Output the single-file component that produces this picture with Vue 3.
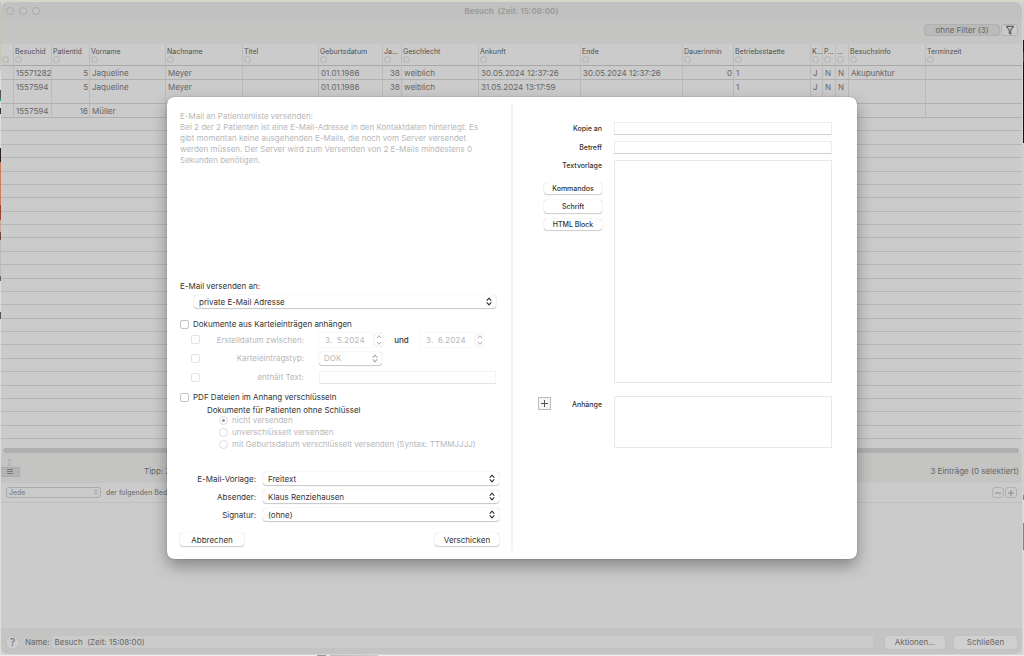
<script setup>
const columns = [
  { label: '', w: 12 },
  { label: 'Besuchid', w: 38 },
  { label: 'Patientid', w: 38 },
  { label: 'Vorname', w: 76 },
  { label: 'Nachname', w: 77 },
  { label: 'Titel', w: 76 },
  { label: 'Geburtsdatum', w: 64 },
  { label: 'Ja…', w: 19 },
  { label: 'Geschlecht', w: 77 },
  { label: 'Ankunft', w: 102 },
  { label: 'Ende', w: 102 },
  { label: 'Dauerinmin', w: 51 },
  { label: 'Betriebsstaette', w: 77 },
  { label: 'K…', w: 12 },
  { label: 'P…', w: 13 },
  { label: '…', w: 13 },
  { label: 'Besuchsinfo', w: 77 },
  { label: 'Terminzeit', w: 0 }
]
const right = new Set([2, 7, 11])
const rows = [
  ['', '15571282', '5', 'Jaqueline', 'Meyer', '', '01.01.1986', '38', 'weiblich', '30.05.2024 12:37:26', '30.05.2024 12:37:26', '0', '1', 'J', 'N', 'N', 'Akupunktur', ''],
  ['', '1557594', '5', 'Jaqueline', 'Meyer', '', '01.01.1986', '38', 'weiblich', '31.05.2024 13:17:59', '', '', '1', 'J', 'N', 'N', '', ''],
  ['', '1557594', '16', 'Müller', '', '', '', '', '', '', '', '', '', '', '', '', '', '']
]
const radios = ['nicht versenden', 'unverschlüsselt versenden', 'mit Geburtsdatum verschlüsselt versenden (Syntax: TTMMJJJJ)']
const choices = [
  { id: 'vorlage', label: 'E-Mail-Vorlage:', value: 'Freitext' },
  { id: 'absender', label: 'Absender:', value: 'Klaus Renziehausen' },
  { id: 'signatur', label: 'Signatur:', value: '(ohne)' }
]
</script>

<template>
  <div class="desktop">
    <main class="window">
      <header class="titlebar">
        <span class="lights"><i></i><i></i><i></i></span>
        <h1>Besuch&nbsp; (Zeit: 15:08:00)</h1>
      </header>
      <div class="toolbar">
        <button class="filter">ohne Filter (3)</button>
        <button class="funnel" aria-label="Filter">
          <svg viewBox="0 0 10 10" width="10" height="10"><path d="M1.5 1.4h7L5.8 5v4L4.2 8V5z" fill="none" stroke="#5c5c5c" stroke-width="1.1" stroke-linejoin="round" /></svg>
        </button>
      </div>
      <table>
        <colgroup><col v-for="(c, i) in columns" :key="i" :style="c.w ? { width: c.w + 'px' } : {}" /></colgroup>
        <thead>
          <tr><th v-for="(c, i) in columns" :key="i"><span>{{ c.label }}</span><i></i></th></tr>
        </thead>
        <tbody>
          <tr v-for="(r, i) in rows" :key="i" :class="{ tall: i === 1 }">
            <td v-for="(v, j) in r" :key="j" :class="{ num: right.has(j) }">{{ v }}</td>
          </tr>
        </tbody>
      </table>
      <div class="blank"><div v-for="n in 24" :key="n"></div></div>
      <div class="scroll"><div class="thumb"></div></div>
      <div class="status">
        <div class="tools">
          <span class="sigma">∑</span>
          <button class="lines" aria-label="Liste">
            <svg viewBox="0 0 8 6" width="8" height="6"><path d="M1 .5h6M1 2.5h6M1 4.5h6" stroke="#777" stroke-width="1" /></svg>
          </button>
        </div>
        <span class="tip">Tipp: Zeilen mit Doppelklick öffnen</span>
        <span class="count">3 Einträge (0 selektiert)</span>
      </div>
      <div class="condition">
        <span class="pick jede">
          <select id="jede" aria-label="Verknüpfung"><option>Jede</option></select>
          <svg viewBox="0 0 6 9" width="4" height="6"><path d="M1 3.4 3 1.2l2 2.2M1 5.6l2 2.2 2-2.2" /></svg>
        </span>
        <label for="jede">der folgenden Bedingungen</label>
        <span class="pm">
          <button aria-label="Entfernen"><svg viewBox="0 0 8 8" width="8" height="8"><path d="M1 4h6" /></svg></button>
          <button aria-label="Hinzufügen"><svg viewBox="0 0 8 8" width="8" height="8"><path d="M1 4h6M4 1v6" /></svg></button>
        </span>
      </div>
      <div class="lower"></div>
      <footer>
        <button class="help">?</button>
        <label for="name">Name:</label>
        <input id="name" type="text" value="Besuch  (Zeit: 15:08:00)" />
        <button class="act">Aktionen...</button>
        <button class="act close">Schließen</button>
      </footer>
    </main>

    <section class="sheet" role="dialog" aria-label="E-Mail versenden">
      <div class="left">
        <p class="info">E-Mail an Patientenliste versenden:<br />Bei 2 der 2 Patienten ist eine E-Mail-Adresse in den Kontaktdaten hinterlegt. Es<br />gibt momentan keine ausgehenden E-Mails, die noch vom Server versendet<br />werden müssen. Der Server wird zum Versenden von 2 E-Mails mindestens 0<br />Sekunden benötigen.</p>
        <label for="an" class="line">E-Mail versenden an:</label>
        <span class="pick an">
          <select id="an"><option>private E-Mail Adresse</option></select>
          <svg viewBox="0 0 6 9" width="6" height="9"><path d="M1 3.4 3 1.2l2 2.2M1 5.6l2 2.2 2-2.2" /></svg>
        </span>
        <label class="check docs"><input type="checkbox" />Dokumente aus Karteieinträgen anhängen</label>
        <div class="opts">
          <input id="c1" type="checkbox" disabled /><label for="c1">Erstelldatum zwischen:</label>
          <div class="dates">
            <input type="text" value="3.  5.2024" aria-label="Datum von" disabled />
            <span class="stepper"><svg viewBox="0 0 8 14" width="8" height="14"><path d="M2 5l2-2.4L6 5M2 9l2 2.4L6 9" /></svg></span>
            <b>und</b>
            <input type="text" value="3.  6.2024" aria-label="Datum bis" disabled />
            <span class="stepper"><svg viewBox="0 0 8 14" width="8" height="14"><path d="M2 5l2-2.4L6 5M2 9l2 2.4L6 9" /></svg></span>
          </div>
          <input id="c2" type="checkbox" disabled /><label for="c2">Karteieintragstyp:</label>
          <span class="pick dok">
            <select aria-label="Karteieintragstyp" disabled><option>DOK</option></select>
            <svg viewBox="0 0 6 9" width="6" height="9"><path d="M1 3.4 3 1.2l2 2.2M1 5.6l2 2.2 2-2.2" /></svg>
          </span>
          <input id="c3" type="checkbox" disabled /><label for="c3">enthält Text:</label>
          <input class="contains" type="text" aria-label="enthält Text" disabled />
        </div>
        <label class="check"><input type="checkbox" />PDF Dateien im Anhang verschlüsseln</label>
        <div class="keys">
          <div class="keyhead">Dokumente für Patienten ohne Schlüssel</div>
          <label v-for="(r, i) in radios" :key="r"><input type="radio" name="key" :checked="i === 0" disabled />{{ r }}</label>
        </div>
        <div class="choices">
          <template v-for="c in choices" :key="c.id">
            <label :for="c.id">{{ c.label }}</label>
            <span class="pick">
              <select :id="c.id"><option>{{ c.value }}</option></select>
              <svg viewBox="0 0 6 9" width="6" height="9"><path d="M1 3.4 3 1.2l2 2.2M1 5.6l2 2.2 2-2.2" /></svg>
            </span>
          </template>
        </div>
        <div class="buttons"><button>Abbrechen</button><button>Verschicken</button></div>
      </div>
      <div class="rule"></div>
      <div class="right">
        <label for="kopie">Kopie an</label><input id="kopie" type="text" />
        <label for="betreff">Betreff</label><input id="betreff" type="text" />
        <div class="side">
          <label for="text">Textvorlage</label>
          <button>Kommandos</button>
          <button class="mid">Schrift</button>
          <button>HTML Block</button>
        </div>
        <textarea id="text" class="body"></textarea>
        <div class="attach">
          <button aria-label="Anhang hinzufügen"><svg viewBox="0 0 9 9" width="9" height="9"><path d="M1 4.5h7M4.5 1v7" stroke="#555" stroke-width="1" /></svg></button>
          <label for="files">Anhänge</label>
        </div>
        <textarea id="files" class="files"></textarea>
      </div>
    </section>
  </div>
</template>

<style>
html, body { margin: 0; }
</style>

<style scoped>
* { box-sizing: border-box; }
.desktop {
  position: relative;
  display: flex;
  flex-direction: column;
  min-height: 100vh;
  padding: 2px 2px 2px 1px;
  font: 8px/10px Inter, "Liberation Sans", sans-serif;
  color: #333;
  background:
    linear-gradient(#d9d6cb, #d9d6cb) 0 0 / 100% 2px no-repeat,
    linear-gradient(90deg, #eee 317px, #999 317px, #999 326px, #eee 326px, #eee 330px, #bbb 330px, #ccc 378px, #eee 378px) 0 100% / 100% 1px no-repeat,
    linear-gradient(#c9c4b8 0 70px, #ddd 70px 90px, #555 90px 98px, #2f9a60 98px 101px, #ddd 101px 108px, #333 108px 114px, #ddd 114px 148px, #2d2220 148px 162px, #cc8060 162px 205px, #9a4434 205px 220px, #c8a89c 220px 232px, #6c4c40 232px 240px, #bbb 240px 276px, #666 276px 281px, #ddd 281px 312px, #555 312px 319px, #ddd 319px) 0 0 / 1px 100% no-repeat,
    linear-gradient(#d0ccc0 0 40px, #1c1520 40px 52px, #4a2f58 52px 62px, #15131a 62px 143px, #ccc 143px 495px, #888 495px 500px, #ddd 500px 523px, #5c86c8 523px 550px, #ddd 550px) 100% 0 / 1px 100% no-repeat,
    #d4d4d4;
}
button, input, select, textarea { font: inherit; color: inherit; margin: 0; padding: 0; border: 0; background: none; outline: 0; }
textarea { resize: none; display: block; }
button { display: flex; align-items: center; justify-content: center; white-space: nowrap; }

.window {
  flex: 1;
  display: flex;
  flex-direction: column;
  overflow: hidden;
  border-radius: 7px;
  background: #cbcbcb;
  color: #666;
}
.titlebar { position: relative; height: 18px; background: #c1c1c1; display: flex; align-items: center; justify-content: center; }
.titlebar h1 { margin: 0; font-size: 8px; line-height: 10px; font-weight: 700; color: #9c9c9c; }
.lights { position: absolute; left: 5px; top: 5px; display: flex; gap: 5px; }
.lights i { width: 8px; height: 8px; border: 1px solid #aaa; border-radius: 50%; background: #c4c4c4; }
.toolbar { height: 24px; background: #c5c5c3; display: flex; align-items: flex-start; justify-content: flex-end; gap: 1px; padding: 4px 4px 0 0; }
.toolbar button { height: 12px; border-radius: 3px; border: 1px solid #b0b0b0; }
.filter { width: 76px; background: #bababa; }
.funnel { width: 17px; background: #cacaca; }

table { width: 100%; table-layout: fixed; border-collapse: separate; border-spacing: 0; }
th { height: 22px; padding: 0 0 0 1px; border-bottom: 1px solid #a8a8a8; border-left: 1px solid #bdbdbd; vertical-align: top; text-align: left; font-weight: 400; font-size: 7px; line-height: 9px; color: #505050; overflow: hidden; white-space: nowrap; }
th:first-child, td:first-child { border-left: 0; }
th span { display: block; height: 9px; margin-top: 3px; }
th i { display: block; width: 7px; height: 7px; border: 1px solid #b2b2b2; border-radius: 50%; }
td { height: 14px; padding: 1px 1px 0 2px; border-bottom: 1px solid #b0b0b0; border-left: 1px solid #bababa; vertical-align: top; line-height: 12px; overflow: hidden; white-space: nowrap; }
.tall td { height: 24px; }
.num { text-align: right; }
.blank { flex: 1; display: flex; flex-direction: column; }
.blank div { flex: 1; border-bottom: 1px solid #b5b5b5; }
.scroll { height: 14px; padding: 5px 3px 0 2px; display: flex; align-items: flex-end; }
.thumb { width: 100%; height: 5px; border-radius: 3px; background: #b0b0b0; }
.status { height: 30px; background: #c4c4c2; display: flex; align-items: center; padding-right: 3px; }
.tools { width: 143px; align-self: stretch; padding-top: 4px; }
.sigma { display: block; padding-left: 6px; height: 10px; color: #aaa; }
.lines { width: 19px; height: 10px; background: #b4b4b4; border: 1px solid #aaa; border-left: 0; }
.tip { padding-top: 5px; }
.count { margin-left: auto; padding-top: 5px; }
.condition { height: 20px; display: flex; align-items: center; gap: 5px; padding: 0 5px; border-bottom: 1px solid #bfbfbf; font-size: 7px; }
.condition .jede { width: 95px; height: 11px; border: 1px solid #aaa; box-shadow: none; background: none; }
.condition .jede select { padding-left: 2px; color: #777; }
.condition .jede svg { stroke: #888; right: 2px; top: 1px; }
.pm { display: flex; gap: 1px; margin-left: auto; }
.pm button { width: 12px; height: 11px; border: 1px solid #b0b0b0; border-radius: 3px; }
.pm svg { stroke: #888; stroke-width: 1; }
.lower { height: 125px; }
footer { height: 26px; background: #c4c4c2; display: flex; align-items: center; padding: 2px 5px 0 5px; }
.help { width: 13px; height: 13px; border-radius: 50%; background: #cecece; box-shadow: 0 0 1px #999; font-size: 10px; }
footer label { margin: 0 2px 0 6px; }
footer input { flex: 1; height: 12px; padding-left: 3px; background: #cbcbcb; white-space: pre; }
.act { width: 60px; height: 13px; margin-left: 12px; border-radius: 3px; background: #d0d0d0; box-shadow: 0 0 1px #aaa; }
.close { width: 63px; margin-left: 9px; }

.sheet {
  position: absolute;
  top: 97px;
  left: 167px;
  right: 167px;
  display: flex;
  background: #fff;
  border-radius: 7px;
  box-shadow: 0 0 1px rgba(0, 0, 0, .6), 0 7px 16px rgba(0, 0, 0, .34);
}
.left { width: 345px; padding: 14px 13px 13px 13px; display: flex; flex-direction: column; }
.info { margin: 0 0 115px; line-height: 11px; color: #b8b8b8; white-space: nowrap; }
.line { margin-bottom: 4px; }
.pick { position: relative; display: block; height: 13px; border-radius: 3px; background: #fff; box-shadow: 0 0 1px rgba(0, 0, 0, .3), 0 1px 1px rgba(0, 0, 0, .2); }
.pick select { appearance: none; display: block; width: 100%; height: 100%; padding-left: 5px; opacity: 1; }
.pick svg { position: absolute; right: 4px; top: 2px; fill: none; stroke: #333; stroke-width: 1.1; stroke-linecap: round; stroke-linejoin: round; pointer-events: none; }
.an { margin: 0 3px 0 14px; }
.check { display: flex; align-items: center; height: 10px; gap: 4px; }
.docs { margin-top: 11px; }
input[type="checkbox"] { appearance: none; width: 9px; height: 9px; border: 1px solid #c4c4c4; border-radius: 2px; background: #fff; }
input[type="checkbox"]:disabled { border-color: #e4e4e4; }
.opts { display: grid; grid-template-columns: 9px 104px 1fr; grid-template-rows: 19px 18px 20px; align-items: center; margin: 1px 3px 5px 11px; color: #b8b8b8; }
.opts > label { text-align: right; }
.dates { display: flex; align-items: center; margin-left: 15px; font-variant-numeric: tabular-nums; }
.dates input { width: 54px; height: 14px; padding-left: 6px; box-shadow: 0 0 1px #ccc; white-space: pre; }
.dates b { width: 37px; text-align: center; color: #333; font-weight: 500; }
.stepper { width: 8px; height: 14px; margin-left: 2px; border-radius: 4px; box-shadow: 0 0 1px #bbb; }
.stepper svg { display: block; fill: none; stroke: #aaa; }
.dok { width: 63px; margin-left: 15px; }
.dok svg { stroke: #aaa; }
.contains { height: 13px; margin-left: 15px; border: 1px solid #f4f4f4; border-bottom-color: #e4e4e4; }
.keys { display: flex; flex-direction: column; margin: 3px 0 22px 27px; }
.keyhead { height: 9px; line-height: 11px; }
.keys label { display: flex; align-items: center; height: 12px; gap: 4px; margin-left: 12px; color: #b8b8b8; white-space: nowrap; }
input[type="radio"] { appearance: none; width: 9px; height: 9px; border: 1px solid #dcdcdc; border-radius: 50%; background: #fff; }
input[type="radio"]:checked { background: radial-gradient(circle, #999 0 1px, #fff 2px); }
.choices { display: grid; grid-template-columns: 76px 1fr; column-gap: 7px; row-gap: 5px; align-items: center; }
.choices > label { text-align: right; }
.buttons { display: flex; justify-content: space-between; margin-top: 12px; }
.buttons button, .side button { width: 64px; height: 13px; border-radius: 3px; background: #fff; box-shadow: 0 0 1px rgba(0, 0, 0, .3), 0 1px 1px rgba(0, 0, 0, .18); }
.rule { width: 2px; margin: 7px 0 8px -1px; background: #f4f4f4; }
.right { flex: 1; display: grid; grid-template-columns: 89px 1fr; grid-template-rows: 13px 13px 223px 52px; column-gap: 12px; row-gap: 6px; align-content: start; padding: 25px 25px 0 0; font-size: 7px; font-weight: 500; }
.right > label { text-align: right; line-height: 13px; }
.right > input { height: 13px; border: 1px solid #ececec; border-bottom-color: #d0d0d0; }
.body, .files { width: 100%; height: 100%; border: 1px solid #e8e8e8; }
.side { display: flex; flex-direction: column; align-items: flex-end; padding-top: 1px; }
.side label { height: 22px; }
.side button { width: 58px; height: 11px; margin-bottom: 6px; }
.side .mid { height: 13px; }
.attach { display: flex; justify-content: space-between; align-items: flex-start; padding: 1px 0 0 25px; }
.attach button { width: 13px; height: 13px; background: #f6f6f6; border: 1px solid #bbb; }
.attach label { line-height: 15px; }
.files, .attach { margin-top: 7px; }
</style>
